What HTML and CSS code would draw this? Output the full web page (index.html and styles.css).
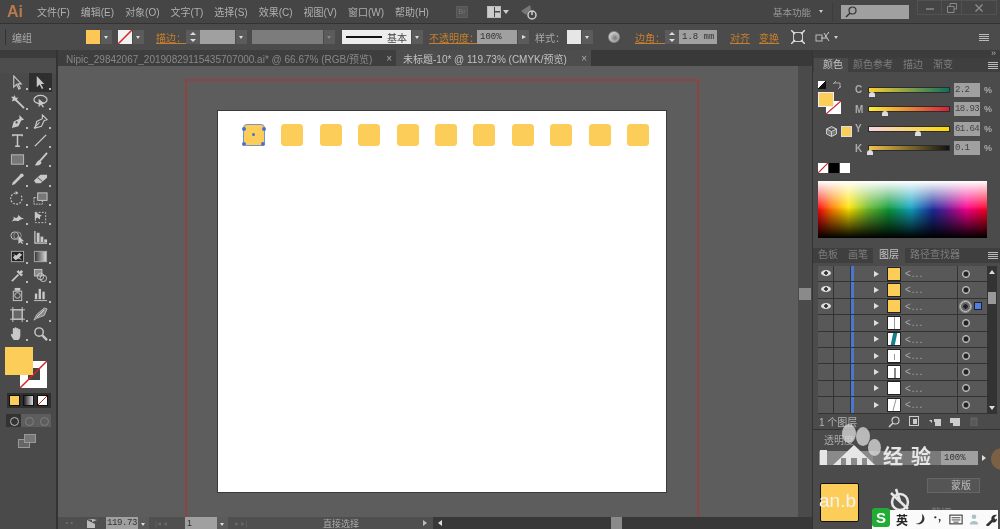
FILE: index.html
```html
<!DOCTYPE html>
<html lang="zh">
<head>
<meta charset="utf-8">
<title>Illustrator</title>
<link rel="stylesheet" href="styles.css">
</head>
<body>
<div class="app">
  <header class="menubar">
    <span class="logo">Ai</span>
    <nav class="menu">
      <span>文件(F)</span><span>编辑(E)</span><span>对象(O)</span><span>文字(T)</span><span>选择(S)</span><span>效果(C)</span><span>视图(V)</span><span>窗口(W)</span><span>帮助(H)</span>
    </nav>
    <span class="br-btn">Br</span>
    <svg class="arr-btn" width="14" height="12" viewBox="0 0 14 12"><rect x="0.5" y="0.5" width="13" height="11" fill="none" stroke="#bbb"/><rect x="1" y="1" width="6" height="10" fill="#ccc"/><rect x="8" y="1" width="5" height="4" fill="#ccc"/><rect x="8" y="6.500" width="5" height="4.500" fill="#ccc"/></svg>
    <span class="tri tri-menu"></span>
    <svg class="sync" width="18" height="18" viewBox="0 0 18 18"><path d="M1 8 L10 2 L11 6 L6 12 Z" fill="#777"/><circle cx="12" cy="12" r="4" fill="none" stroke="#ccc" stroke-width="1.500"/><path d="M12 8v4" stroke="#ccc" stroke-width="1.500"/></svg>
    <span class="workspace">基本功能</span>
    <span class="tri tri-small"></span>
    <span class="v-sep"></span>
    <div class="search"><svg width="12" height="12" viewBox="0 0 12 12"><circle cx="7.500" cy="4.500" r="3.500" fill="none" stroke="#333" stroke-width="1.200"/><path d="M5 7 L1 11" stroke="#333" stroke-width="1.500"/></svg></div>
    <div class="win-btns">
      <span class="win win-min"><svg width="10" height="10" viewBox="0 0 10 10"><path d="M1 6h8" stroke="#777" stroke-width="2"/></svg></span>
      <span class="win win-max"><svg width="10" height="10" viewBox="0 0 10 10"><path d="M3 3V0.500h6.500V6H7M0.500 3.500H7V9.500H0.500Z" stroke="#888" fill="none"/></svg></span>
      <span class="win win-close"><svg width="10" height="10" viewBox="0 0 10 10"><path d="M1.500 1.500l7 7M8.500 1.500l-7 7" stroke="#888" stroke-width="1.500"/></svg></span>
    </div>
  </header>

  <div class="controlbar">
    <span class="grip"></span>
    <span class="ctl-label w-group">编组</span>
    <span class="swatch yellow-swatch"></span>
    <span class="drop"></span>
    <span class="swatch none-swatch"><svg width="14" height="14" viewBox="0 0 14 14"><path d="M0 14L14 0" stroke="#d2232a" stroke-width="1.500"/></svg></span>
    <span class="drop"></span>
    <span class="link-label stroke-label">描边：</span>
    <span class="stepper"><i></i><b></b></span>
    <span class="field f-stroke"></span>
    <span class="drop"></span>
    <span class="field f-profile"></span>
    <span class="drop drop-dim"></span>
    <span class="line-box"><i></i><em>基本</em></span>
    <span class="drop"></span>
    <span class="link-label opacity-label">不透明度：</span>
    <span class="field f-opacity">100%</span>
    <span class="drop arrow-right"></span>
    <span class="ctl-label style-label">样式：</span>
    <span class="swatch white-swatch"></span>
    <span class="drop"></span>
    <span class="globe"></span>
    <span class="link-label corner-label">边角：</span>
    <span class="stepper"><i></i><b></b></span>
    <span class="field f-corner">1.8 mm</span>
    <span class="link-label align-label">对齐</span>
    <span class="link-label transform-label">变换</span>
    <svg class="ctl-icon icon-a" width="14" height="14" viewBox="0 0 14 14"><rect x="2.500" y="2.500" width="9" height="9" fill="none" stroke="#ccc"/><path d="M0 0l4 4M14 0l-4 4M0 14l4-4M14 14l-4-4" stroke="#ddd" stroke-width="1.500"/></svg>
    <svg class="ctl-icon icon-b" width="16" height="14" viewBox="0 0 16 14"><rect x="1" y="5" width="6" height="6" fill="none" stroke="#bbb"/><path d="M6 8h6M9 3l5 8M14 2l-4 5" stroke="#ccc"/></svg>
    <span class="tri tri-small icon-b-tri"></span>
    <span class="panel-menu ctl-menu"></span>
  </div>

  <div class="workspace-row">
    <aside class="toolbar">
      <div class="tool-grip"></div>
      <div class="tools">
        <span class="tool"><svg viewBox="0 0 16 16"><path d="M4 1v12l3-3 2.500 5 1.500-1-2.500-4.500H12Z" stroke-width="1.200"/></svg></span>
        <span class="tool tool-on"><svg viewBox="0 0 16 16"><path d="M4 1v12l3-3 2.500 5 1.500-1-2.500-4.500H12Z" class="solid"/></svg></span>
        <span class="tool"><svg viewBox="0 0 16 16"><path d="M6 6l9 9" stroke-width="2"/><path d="M5 1l1 3 3 0-2 2 1 3-3-2-3 1 1-3-2-2 3 0Z" class="solid"/></svg></span>
        <span class="tool"><svg viewBox="0 0 16 16"><ellipse cx="8" cy="6" rx="7" ry="4.500" stroke-width="1.300"/><path d="M6 5v9l2.500-2.500 2 3 1.200-.8-2-3H13Z" class="solid"/></svg></span>
        <span class="tool"><svg viewBox="0 0 16 16"><path d="M10 1l5 5-3 1-3 6-7 2 2-7 6-3Z" stroke-width="0" class="solid"/><circle cx="7" cy="9" r="1.200" fill="#4a4a4a" stroke="none"/></svg></span>
        <span class="tool"><svg viewBox="0 0 16 16"><path d="M10 1l5 5-3 1-3 6-7 2 2-7 6-3ZM1 15l6-6" stroke-width="1.200"/></svg></span>
        <span class="tool"><svg viewBox="0 0 16 16"><path d="M3 3.500V2h10v1.500M8 2v12M5.500 14h5" stroke-width="1.600"/></svg></span>
        <span class="tool"><svg viewBox="0 0 16 16"><path d="M2 14L14 2" stroke-width="1.500"/></svg></span>
        <span class="tool"><svg viewBox="0 0 16 16"><rect x="1.500" y="3" width="13" height="10" fill="#777" stroke="#bbb"/></svg></span>
        <span class="tool"><svg viewBox="0 0 16 16"><path d="M15 1L7 10" stroke-width="2"/><path d="M7 9c-3 0-3 3-5 5 3 1 7 0 7-3Z" class="solid"/></svg></span>
        <span class="tool"><svg viewBox="0 0 16 16"><path d="M3 11l8-8 2 2-8 8-3 1Z" class="solid"/><circle cx="12.500" cy="3.500" r="2" class="solid"/></svg></span>
        <span class="tool"><svg viewBox="0 0 16 16"><path d="M1 9l7-6h7v3l-7 6H3Z" class="solid"/><path d="M5 6l5 4" stroke="#4a4a4a"/></svg></span>
        <span class="tool"><svg viewBox="0 0 16 16"><path d="M12 5a6 6 0 1 1-5-3" stroke-width="1.200" stroke-dasharray="2 1.500"/><path d="M6 0l3 2-3 2Z" class="solid"/></svg></span>
        <span class="tool"><svg viewBox="0 0 16 16"><rect x="1" y="7" width="9" height="7" stroke-dasharray="2 1"/><rect x="5" y="2" width="10" height="8" fill="#777"/></svg></span>
        <span class="tool"><svg viewBox="0 0 16 16"><path d="M1 13c2-1 3-3 3-6 2 3 5 1 5-2 2 3 5 4 6 4-2 1-5 1-6 3-2-1-5-1-8 1Z" class="solid"/></svg></span>
        <span class="tool"><svg viewBox="0 0 16 16"><rect x="2.500" y="2.500" width="11" height="11" stroke-dasharray="2 1.500"/><path d="M2 2v8l2.500-2 3 2V7l2-1Z" class="solid"/></svg></span>
        <span class="tool"><svg viewBox="0 0 16 16"><circle cx="5" cy="6" r="4"/><circle cx="8" cy="6" r="4" stroke="#999"/><path d="M9 6v9l2-2 2 2 1-1-2-2h3Z" class="solid"/></svg></span>
        <span class="tool"><svg viewBox="0 0 16 16"><path d="M2 1v13h13" stroke-width="1.300"/><rect x="4" y="3" width="3" height="10" class="solid"/><rect x="8" y="7" width="3" height="6" class="solid"/><rect x="12" y="10" width="3" height="3" class="solid"/></svg></span>
        <span class="tool"><svg viewBox="0 0 16 16"><rect x="1.500" y="2.500" width="13" height="11" fill="#222" stroke="#aaa"/><path d="M3 5l4 2 3-3 3 2-3 3 3 3-4-2-3 2-3-3 2-2Z" class="solid"/></svg></span>
        <span class="tool"><svg viewBox="0 0 16 16"><rect x="1.500" y="2.500" width="13" height="11" fill="url(#grad)" stroke="#aaa"/><defs><linearGradient id="grad"><stop offset="0" stop-color="#333"/><stop offset="1" stop-color="#ddd"/></linearGradient></defs></svg></span>
        <span class="tool"><svg viewBox="0 0 16 16"><path d="M2 14l7-7" stroke-width="1.800"/><path d="M7 4l5 5 2-2-2-1 2-2-2-2-2 2-1-2Z" class="solid"/></svg></span>
        <span class="tool"><svg viewBox="0 0 16 16"><rect x="1.500" y="1.500" width="8" height="7" fill="#888"/><circle cx="8" cy="9" r="3.500"/><circle cx="11" cy="11" r="3.500"/></svg></span>
        <span class="tool"><svg viewBox="0 0 16 16"><circle cx="8" cy="9" r="3"/><rect x="3.500" y="4.500" width="9" height="10"/><path d="M5 1h6v3H5Z" class="solid"/></svg></span>
        <span class="tool"><svg viewBox="0 0 16 16"><path d="M1 14.500h14" stroke-width="1"/><rect x="2" y="7" width="2.500" height="6" class="solid"/><rect x="6" y="2" width="2.500" height="11" class="solid"/><rect x="10" y="5" width="2.500" height="8" class="solid"/></svg></span>
        <span class="tool"><svg viewBox="0 0 16 16"><rect x="3" y="3" width="10" height="10" fill="#666"/><path d="M3 0v16M13 0v16M0 3h16M0 13h16" stroke-width="1"/></svg></span>
        <span class="tool"><svg viewBox="0 0 16 16"><path d="M1 14l3-6 8-7 3 1-3 7-8 3Z" fill="#888" stroke="#bbb"/><path d="M4 11l8-8" stroke="#ddd"/></svg></span>
        <span class="tool"><svg viewBox="0 0 16 16"><path d="M4 15c-1-2-3-4-3-6 0-1 1-1 2 0V3c0-1 2-1 2 0V2c0-1 2-1 2 0v1c0-1 2-1 2 0v1c0-1 2-1 2 0v6c0 2-1 4-2 5Z" class="solid"/></svg></span>
        <span class="tool"><svg viewBox="0 0 16 16"><circle cx="6.500" cy="6.500" r="4.500" stroke-width="1.500"/><path d="M10 10l5 5" stroke-width="2.500"/></svg></span>
      </div>
      <div class="color-box">
        <span class="big-fill"></span>
        <span class="big-stroke"><svg width="27" height="27" viewBox="0 0 27 27"><path d="M0 27L27 0" stroke="#d2232a" stroke-width="1.500"/></svg></span>
      </div>
      <div class="mode-row">
        <span class="mode mode-color"></span><span class="mode mode-grad"></span><span class="mode mode-none"></span>
      </div>
      <div class="draw-row">
        <span class="draw draw-on"></span><span class="draw"></span><span class="draw"></span>
      </div>
      <div class="screen-mode"><i></i><b></b></div>
    </aside>

    <main class="docs">
      <div class="tabs">
        <div class="tab tab-a"><span>Nipic_29842067_20190829115435707000.ai* @ 66.67% (RGB/预览)</span><em>×</em></div>
        <div class="tab tab-b"><span>未标题-10* @ 119.73% (CMYK/预览)</span><em>×</em></div>
      </div>
      <div class="canvas-wrap">
        <div class="canvas">
          <div class="bleed"></div>
          <div class="artboard">
            <div class="square-row">
              <span class="square selected"><i class="h h1"></i><i class="h h2"></i><i class="h h3"></i><i class="h h4"></i><i class="h h5"></i></span>
              <span class="square"></span><span class="square"></span><span class="square"></span><span class="square"></span><span class="square"></span><span class="square"></span><span class="square"></span><span class="square"></span><span class="square"></span><span class="square"></span>
            </div>
          </div>
        </div>
        <div class="v-scroll"><span></span></div>
      </div>
      <div class="status">
        <div class="status-left">
          <span class="st-icons">◔◔</span>
          <svg class="st-share" width="10" height="9" viewBox="0 0 10 9"><path d="M0 1h5v2L10 1 6 0M0 1v8h8V5" fill="#bbb"/></svg>
          <span class="zoom-field">119.73</span><span class="drop st-drop"></span>
          <span class="nav">|◂ ◂</span>
          <span class="page-field">1</span><span class="drop st-drop"></span>
          <span class="nav nav-r">▸ ▸|</span>
          <span class="st-text">直接选择</span>
          <span class="tri-r"></span>
        </div>
        <div class="h-scroll"><span class="tri-l"></span><span class="h-thumb"></span></div>
      </div>
    </main>

    <aside class="panels">
      <div class="panel-strip">»</div>
      <section class="color-panel">
        <div class="ptabs">
          <span class="ptab on arrows">颜色</span><span class="ptab">颜色参考</span><span class="ptab">描边</span><span class="ptab">渐变</span><span class="panel-menu"></span>
        </div>
        <div class="color-body">
          <div class="color-left">
            <div class="default-icons"><i></i><svg width="8" height="8" viewBox="0 0 8 8"><path d="M0 3L3 0M5 8L8 5M1 2h6v5" stroke="#aaa" fill="none"/></svg></div>
            <div class="fs-pair"><span class="fs-fill"></span><span class="fs-stroke"><svg width="15" height="13" viewBox="0 0 15 13"><path d="M0 13L15 0" stroke="#d2232a" stroke-width="1.300"/></svg></span></div>
            <div class="gamut"><svg width="11" height="11" viewBox="0 0 11 11"><path d="M5.500 0.500l5 2.500v5l-5 2.500-5-2.500v-5ZM.5 3l5 2.500 5-2.500M5.500 5.500v5" fill="#777" stroke="#ccc"/></svg><span></span></div>
          </div>
          <div class="sliders">
            <div class="slider"><label>C</label><div class="track t-c"><i class="p-2"></i></div><span class="val">2.2</span><em>%</em></div>
            <div class="slider"><label>M</label><div class="track t-m"><i class="p-19"></i></div><span class="val">18.93</span><em>%</em></div>
            <div class="slider"><label>Y</label><div class="track t-y"><i class="p-62"></i></div><span class="val">61.64</span><em>%</em></div>
            <div class="slider"><label>K</label><div class="track t-k"><i class="p-0"></i></div><span class="val">0.1</span><em>%</em></div>
          </div>
        </div>
        <div class="chips"><span class="chip chip-none"><svg width="10" height="10" viewBox="0 0 10 10"><path d="M0 10L10 0" stroke="#d2232a" stroke-width="1.200"/></svg></span><span class="chip chip-k"></span><span class="chip chip-w"></span></div>
        <div class="spectrum"><i class="spec-light"></i><i class="spec-dark"></i></div>
      </section>

      <section class="layers-panel">
        <div class="ptabs ptabs-2">
          <span class="ptab">色板</span><span class="ptab">画笔</span><span class="ptab on">图层</span><span class="ptab">路径查找器</span><span class="panel-menu"></span>
        </div>
        <div class="layers-wrap">
          <div class="layers">
            <div class="lrow"><span class="eye on"></span><span class="lock"></span><span class="bar"></span><span class="expand"></span><span class="thumb th-y"></span><span class="lname">&lt;...</span><span class="target"></span><span class="sel"></span></div>
            <div class="lrow"><span class="eye on"></span><span class="lock"></span><span class="bar"></span><span class="expand"></span><span class="thumb th-y"></span><span class="lname">&lt;...</span><span class="target"></span><span class="sel"></span></div>
            <div class="lrow"><span class="eye on"></span><span class="lock"></span><span class="bar"></span><span class="expand"></span><span class="thumb th-y"></span><span class="lname">&lt;...</span><span class="target active"></span><span class="sel on"></span></div>
            <div class="lrow"><span class="eye"></span><span class="lock"></span><span class="bar"></span><span class="expand"></span><span class="thumb th-w th-line"></span><span class="lname">&lt;...</span><span class="target"></span><span class="sel"></span></div>
            <div class="lrow"><span class="eye"></span><span class="lock"></span><span class="bar"></span><span class="expand"></span><span class="thumb th-w th-teal"></span><span class="lname">&lt;...</span><span class="target"></span><span class="sel"></span></div>
            <div class="lrow"><span class="eye"></span><span class="lock"></span><span class="bar"></span><span class="expand"></span><span class="thumb th-w th-short"></span><span class="lname">&lt;...</span><span class="target"></span><span class="sel"></span></div>
            <div class="lrow"><span class="eye"></span><span class="lock"></span><span class="bar"></span><span class="expand"></span><span class="thumb th-w th-mid"></span><span class="lname">&lt;...</span><span class="target"></span><span class="sel"></span></div>
            <div class="lrow"><span class="eye"></span><span class="lock"></span><span class="bar"></span><span class="expand"></span><span class="thumb th-w"></span><span class="lname">&lt;...</span><span class="target"></span><span class="sel"></span></div>
            <div class="lrow"><span class="eye"></span><span class="lock"></span><span class="bar"></span><span class="expand"></span><span class="thumb th-w th-slant"></span><span class="lname">&lt;...</span><span class="target"></span><span class="sel"></span></div>
          </div>
          <div class="l-scroll"><span class="up"></span><span class="l-thumb"></span><span class="down"></span></div>
        </div>
        <div class="layers-foot">
          <span class="count">1 个图层</span>
          <svg class="foot-i i1" width="12" height="12" viewBox="0 0 12 12"><circle cx="7.500" cy="4.500" r="3.500" fill="none" stroke="#ccc" stroke-width="1.200"/><path d="M5 7l-4 4" stroke="#ccc" stroke-width="1.600"/></svg>
          <svg class="foot-i i2" width="10" height="10" viewBox="0 0 10 10"><rect x=".5" y=".5" width="9" height="9" fill="none" stroke="#ccc"/><rect x="4" y="3" width="4" height="5" fill="#ccc"/></svg>
          <svg class="foot-i i3" width="12" height="8" viewBox="0 0 12 8"><path d="M0 2h3v3M5 1h7v7H6V4H5Z" fill="#ccc"/></svg>
          <svg class="foot-i i4" width="10" height="10" viewBox="0 0 10 10"><path d="M0 2h7l3 0v8H3V7H0Z" fill="#ccc"/></svg>
          <svg class="foot-i i5" width="10" height="10" viewBox="0 0 10 10"><path d="M1 2h8M2 3h6v7H2Z" fill="#585858" stroke="#666"/></svg>
        </div>
      </section>

      <section class="opacity-panel">
        <div class="op-tab">透明度</div>
        <div class="op-row"><span class="op-mode"></span><span class="op-gap"></span><span class="field f-op">100%</span><span class="op-arrow"></span></div>
        <div class="op-thumbs"><span class="op-thumb"></span><span class="mask-btn">蒙版</span></div>
        <div class="op-clip">剪切</div>
      </section>
    </aside>
  </div>
</div>

<div class="overlay paw">
  <i class="toe t1"></i><i class="toe t2"></i><i class="toe t3"></i>
  <svg class="paw-base" width="60" height="22" viewBox="0 0 60 22"><path d="M0 6h7v15H0ZM13 21L34 1 55 21H47V14H42V21H37V14H31V21H26V14H21V21Z" fill="#e6e6e6"/></svg>
  <span class="paw-text">经验</span>
  <span class="url-text">an.b</span>
</div>
<div class="overlay brown-dot"></div>
<div class="overlay clock"><svg width="24" height="24" viewBox="0 0 24 24"><circle cx="12" cy="14" r="8" fill="none" stroke="#e6e6e6" stroke-width="2.500"/><path d="M3 5l17 16M8 1l4 12" stroke="#e6e6e6" stroke-width="2.500"/></svg></div>
<div class="overlay ime">
  <span class="ime-s">S</span><span class="ime-en">英</span>
  <svg width="13" height="13" viewBox="0 0 15 15"><path d="M9 1a6 6 0 0 1-7 11c5 1 9-4 7-11Z" fill="#333"/></svg>
  <svg width="10" height="10" viewBox="0 0 13 13"><circle cx="3" cy="3" r="1.500" fill="#333"/><path d="M9 5c2 2 0 5-2 6 1-1 2-4 0-5Z" fill="#333"/></svg>
  <svg width="14" height="11" viewBox="0 0 16 12"><rect x="1" y="1" width="14" height="10" fill="none" stroke="#333" stroke-width="1.200"/><path d="M3 4h10M3 6.500h10M5 9h6" stroke="#333"/></svg>
  <svg width="10" height="13" viewBox="0 0 13 15"><circle cx="6.500" cy="4" r="3" fill="#a9c3c0"/><path d="M1 14c0-6 11-6 11 0Z" fill="#a9c3c0"/></svg>
  <svg width="13" height="13" viewBox="0 0 14 14"><path d="M1 13l6-6c-1-3 2-6 6-5l-3 3 1 2 2-1c0 4-3 5-5 4l-5 5Z" fill="#333"/></svg>
</div>
</body>
</html>
```
FILE: styles.css
```css
* { box-sizing: border-box; }
html, body { margin: 0; width: 1000px; height: 529px; overflow: hidden; background: #4a4a4a; }
body { position: relative; font-family: "Liberation Sans", "Noto Sans CJK SC", sans-serif; font-size: 10px; color: #b4b4b4; filter: blur(.35px); }
em, i { font-style: normal; }
.app { width: 1000px; height: 529px; display: flex; flex-direction: column; }
.menubar > *, .controlbar > * { flex: none; }

/* menu bar */
.menubar { height: 23px; background: #454545; display: flex; align-items: center; flex: none; }
.logo { width: 37px; padding-left: 7px; color: #b8794c; font-size: 16px; font-weight: bold; }
.menu { display: flex; gap: 11px; width: 408px; }
.menu span { font-size: 10px; color: #b0b0b0; white-space: nowrap; }
.br-btn { width: 12px; height: 12px; background: #555; border: 1px solid #5e5e5e; color: #777; font-size: 7px; line-height: 10px; text-align: center; margin-left: 11px; }
.arr-btn { margin-left: 19px; }
.tri { display: inline-block; width: 0; height: 0; border-left: 3px solid transparent; border-right: 3px solid transparent; border-top: 4px solid #ccc; }
.tri-menu { margin-left: 2px; }
.sync { margin-left: 11px; }
.workspace { margin-left: 235px; font-size: 9.500px; color: #999; white-space: nowrap; }
.tri-small { margin-left: 8px; border-top-width: 3px; border-left-width: 2.500px; border-right-width: 2.500px; }
.v-sep { width: 1px; height: 20px; background: #3c3c3c; margin-left: 9px; }
.search { width: 68px; height: 14px; margin-left: 8px; background: #a0a0a0; display: flex; align-items: center; padding-left: 4px; }
.win-btns { display: flex; margin-left: 8px; height: 15px; margin-top: -8px; border: 1px solid #525252; }
.win { display: flex; align-items: center; justify-content: center; border-right: 1px solid #525252; }
.win-min { width: 24px; } .win-max { width: 20px; } .win-close { width: 34px; border-right: 0; }

/* control bar */
.controlbar { height: 27px; flex: none; background: #4b4b4b; border-top: 1px solid #333; display: flex; align-items: center; position: relative; }
.grip { width: 1px; height: 16px; background: #333; margin-left: 5px; }
.ctl-label { color: #aaa; white-space: nowrap; }
.w-group { margin-left: 6px; width: 74px; }
.swatch { width: 14px; height: 14px; flex: none; display: block; }
.yellow-swatch { background: #fdc755; }
.none-swatch { background: #f2f2f2; margin-left: 6px; }
.white-swatch { background: #e6e6e6; margin-left: 6px; }
.drop { flex: none; width: 11px; height: 14px; margin-left: 1px; background: #5b5b5b; position: relative; display: block; }
.drop::after { content: ""; position: absolute; left: 3px; top: 6px; border-left: 2.500px solid transparent; border-right: 2.500px solid transparent; border-top: 3px solid #ddd; }
.drop-dim::after { border-top-color: #888; }
.arrow-right::after { border-left: 4px solid #ddd; border-right: 0; border-top: 2.500px solid transparent; border-bottom: 2.500px solid transparent; left: 4px; top: 5px; }
.link-label { color: #c87f2c; text-decoration: underline; text-underline-offset: 1px; white-space: nowrap; flex: none; }
.stroke-label { margin-left: 12px; width: 30px; }
.stepper { width: 14px; height: 14px; background: #5b5b5b; flex: none; display: flex; flex-direction: column; align-items: center; justify-content: space-around; }
.stepper i { border-left: 3px solid transparent; border-right: 3px solid transparent; border-bottom: 3px solid #ddd; }
.stepper b { border-left: 3px solid transparent; border-right: 3px solid transparent; border-top: 3px solid #ddd; }
.field { display: block; height: 14px; flex: none; background: #a0a0a0; color: #333; font-size: 9px; line-height: 14px; font-family: "Liberation Mono", monospace; padding-left: 3px; }
.f-stroke { width: 35px; }
.f-profile { width: 71px; background: #7c7c7c; margin-left: 5px; }
.line-box { width: 69px; height: 14px; flex: none; margin-left: 7px; background: #ececec; display: flex; align-items: center; padding-left: 4px; }
.line-box i { width: 36px; height: 2px; background: #111; }
.line-box em { margin-left: 5px; color: #444; font-size: 10px; }
.opacity-label { margin-left: 6px; width: 48px; }
.f-opacity { width: 40px; }
.style-label { margin-left: 6px; width: 26px; }
.globe { width: 12px; height: 12px; border-radius: 50%; background: radial-gradient(circle at 60% 60%, #777, #ddd 80%); margin-left: 15px; flex: none; border: 1px solid #888; }
.corner-label { margin-left: 15px; width: 30px; }
.f-corner { width: 38px; font-size: 9px; }
.align-label { margin-left: 13px; width: 29px; }
.transform-label { width: 32px; }
.ctl-icon { flex: none; }
.icon-b { margin-left: 10px; }
.icon-b-tri { margin-left: 3px; }
.panel-menu { display: block; width: 10px; height: 7px; flex: none; background: repeating-linear-gradient(#bbb 0 1px, transparent 1px 2px); }
.ctl-menu { position: absolute; left: 979px; top: 10px; }

/* main row */
.workspace-row { flex: 1; display: flex; min-height: 0; }

/* toolbar */
.toolbar { width: 58px; flex: none; background: #4a4a4a; border-right: 2px solid #333; }
.tool-grip { height: 23px; background: linear-gradient(#3c3c3c 0 8px, #4d4d4d 8px); }
.tools { display: grid; grid-template-columns: 23px 23px; grid-auto-rows: 19.300px; padding-left: 6px; }
.tool { display: flex; align-items: center; justify-content: center; position: relative; }
.tool svg { width: 15px; height: 15px; fill: none; stroke: #c8c8c8; }
.tool svg .solid { fill: #c8c8c8; stroke: none; }
.tool-on { background: #2f2f2f; }
.tool::after { content: ""; position: absolute; right: 1px; bottom: 2px; width: 2px; height: 2px; background: #bbb; }
.color-box { position: relative; height: 46px; margin-top: 4px; }
.big-fill { position: absolute; left: 5px; top: 0; width: 28px; height: 28px; background: #fdcd5a; z-index: 1; }
.big-stroke { position: absolute; left: 20px; top: 14px; width: 27px; height: 27px; background: #fff; display: block; }
.big-stroke::before { content: ""; position: absolute; left: 8px; top: 7px; width: 12px; height: 12px; background: #444; }
.big-stroke svg { position: absolute; left: 0; top: 0; }
.mode-row { display: flex; gap: 3px; margin-left: 7px; width: 44px; height: 15px; background: #2f2f2f; padding: 2px; }
.mode { width: 11px; height: 11px; display: block; flex: none; border: 1px solid #111; }
.mode-color { background: #fdcd5a; }
.mode-grad { background: linear-gradient(90deg, #222, #ddd); }
.mode-none { background: linear-gradient(135deg, #fff 45%, #d2232a 45% 55%, #fff 55%); }
.draw-row { display: flex; margin: 6px 0 0 6px; height: 13px; width: 45px; }
.draw { flex: 1; background: #5d5d5d; position: relative; }
.draw::after { content: ""; position: absolute; left: 4px; top: 3px; width: 7px; height: 7px; border-radius: 50%; border: 1px solid #808080; }
.draw-on { background: #333; }
.draw-on::after { border-color: #bbb; }
.screen-mode { position: relative; width: 18px; height: 14px; margin: 7px 0 0 18px; }
.screen-mode i, .screen-mode b { position: absolute; display: block; width: 12px; height: 9px; border: 1px solid #999; }
.screen-mode i { left: 0; bottom: 0; background: #666; }
.screen-mode b { right: 0; top: 0; background: #777; }

/* documents */
.docs { flex: 1; min-width: 0; display: flex; flex-direction: column; }
.tabs { height: 16px; background: #393939; display: flex; flex: none; }
.tab { display: flex; align-items: center; justify-content: space-between; white-space: nowrap; font-size: 10px; padding: 0 4px 0 8px; }
.tab-a { width: 338px; color: #888; background: #3e3e3e; }
.tab-b { width: 195px; color: #c2c2c2; background: #4d4d4d; padding-left: 7px; }
.tab em { font-size: 10px; color: #aaa; }
.canvas-wrap { flex: 1; display: flex; min-height: 0; }
.canvas { flex: 1; position: relative; background: #5d5d5d; overflow: hidden; }
.bleed { position: absolute; left: 127px; top: 13px; width: 514px; height: 480px; border: 2px solid #8f4444; }
.artboard { position: absolute; left: 160px; top: 45px; width: 448px; height: 381px; background: #fff; box-shadow: 0 0 0 1px #3a3a3a; padding: 13px 17px 0 25px; }
.square-row { display: flex; justify-content: space-between; }
.square { width: 22px; height: 22px; border-radius: 3.500px; background: #fdcd5a; display: block; position: relative; flex: none; }
.square.selected { border-radius: 4px; border: 1px solid #7b92c8; }
.h { position: absolute; width: 4px; height: 4px; border-radius: 50%; background: #4a6fd0; }
.h1 { left: -2px; top: 2px; } .h2 { right: -2px; top: 2px; } .h3 { left: -2px; bottom: -1px; } .h4 { right: -1px; bottom: -1px; }
.h5 { left: 8px; top: 8px; width: 3px; height: 3px; }
.v-scroll { width: 14px; flex: none; background: #4a4a4a; position: relative; }
.v-scroll span { position: absolute; left: 1px; top: 222px; width: 12px; height: 12px; background: #8a8a8a; }

/* status bar */
.status { height: 12px; flex: none; display: flex; }
.status-left { width: 375px; background: #4f4f4f; display: flex; align-items: center; overflow: hidden; color: #999; font-size: 9px; }
.st-icons { width: 20px; margin-left: 6px; color: #777; font-size: 8px; }
.st-share { margin-left: 3px; }
.zoom-field { margin-left: 9px; width: 32px; height: 12px; background: #a0a0a0; color: #333; font-size: 9px; line-height: 13px; padding-left: 1px; font-family: "Liberation Mono", monospace; letter-spacing: -.4px; }
.st-drop { height: 12px; margin-left: 0; }
.st-drop::after { top: 6px; }
.nav { color: #666; margin-left: 6px; width: 24px; font-size: 8px; }
.page-field { margin-left: 6px; width: 32px; height: 12px; background: #a0a0a0; color: #333; font-size: 9px; line-height: 13px; padding-left: 2px; }
.nav-r { margin-left: 7px; width: 26px; }
.st-text { margin-left: 62px; width: 100px; font-size: 9px; color: #aaa; }
.tri-r { border-left: 4px solid #bbb; border-top: 3px solid transparent; border-bottom: 3px solid transparent; }
.h-scroll { flex: 1; background: #383838; position: relative; display: flex; align-items: center; }
.tri-l { display: block; border-right: 4px solid #ddd; border-top: 3.500px solid transparent; border-bottom: 3.500px solid transparent; margin-left: 5px; }
.h-thumb { position: absolute; left: 178px; top: 0; width: 11px; height: 12px; background: #8a8a8a; }

/* right panels */
.panels { width: 188px; flex: none; background: #4b4b4b; border-left: 1px solid #333; display: flex; flex-direction: column; }
.panel-strip { height: 8px; background: #3c3c3c; color: #aaa; font-size: 9px; line-height: 7px; text-align: right; padding-right: 4px; flex: none; }
.ptabs { display: flex; align-items: center; height: 14px; background: #3f3f3f; position: relative; padding-left: 1px; }
.ptab { padding: 0 5px; height: 14px; line-height: 14px; color: #7d7d7d; font-size: 10px; white-space: nowrap; }
.ptab.on { background: #4b4b4b; color: #c4c4c4; }
.ptab.arrows { padding-left: 9px; padding-right: 5px; }
.ptabs .panel-menu { position: absolute; right: 2px; top: 4px; }
.color-panel { height: 183px; flex: none; }
.color-body { display: flex; height: 83px; }
.color-left { width: 42px; flex: none; padding-left: 5px; }
.default-icons { display: flex; gap: 7px; align-items: center; height: 10px; margin-top: 8px; }
.default-icons i { width: 8px; height: 8px; display: block; background: linear-gradient(135deg, #fff 50%, #111 50%); }
.fs-pair { position: relative; height: 28px; margin-top: 2px; }
.fs-fill { position: absolute; left: 0; top: 0; width: 16px; height: 15px; background: #fdcd5a; border: 1px solid #eee; z-index: 1; }
.fs-stroke { position: absolute; left: 8px; top: 9px; width: 15px; height: 13px; background: #fff; display: block; }
.fs-stroke svg { display: block; }
.gamut { display: flex; align-items: center; gap: 4px; margin-left: 8px; margin-top: 6px; }
.gamut span { width: 11px; height: 11px; background: #fdcd5a; border: 1px solid #ddd; }
.sliders { flex: 1; padding-top: 8px; }
.slider { height: 19.500px; display: flex; align-items: center; }
.slider label { width: 14px; margin-left: 0; color: #aaa; font-size: 10px; font-weight: bold; }
.track { width: 80px; height: 4px; margin-right: 5px; position: relative; box-shadow: 0 0 0 1px #2c2c2c; }
.track i { position: absolute; top: 4px; width: 6px; height: 5px; background: #ddd; border-radius: 3px 3px 0 0; }
.p-2 { left: 0; } .p-19 { left: 13px; } .p-62 { left: 46px; } .p-0 { left: -2px; }
.t-c { background: linear-gradient(90deg, #fdd030, #0f6f5f); }
.t-m { background: linear-gradient(90deg, #fff033, #d5203c); }
.t-y { background: linear-gradient(90deg, #f8d6e2, #ffd700); }
.t-k { background: linear-gradient(90deg, #f0c54c, #111); }
.val { display: block; width: 26px; height: 14px; background: #a0a0a0; color: #444; font-family: "Liberation Mono", monospace; font-size: 9px; letter-spacing: -.6px; line-height: 14px; padding-left: 1px; white-space: nowrap; }
.slider em { margin-left: 4px; color: #aaa; font-weight: bold; font-size: 9px; }
.chips { display: flex; margin: 8px 0 0 5px; }
.chip { width: 10px; height: 10px; display: block; }
.chip-none { background: #fff; }
.chip-k { background: #000; margin-left: 1px; }
.chip-w { background: #fff; margin-left: 1px; }
.chip svg { display: block; }
.spectrum { position: relative; width: 169px; height: 57px; margin: 8px 0 0 5px; background: linear-gradient(90deg, #ff0010 0%, #ff7a00 8%, #ffe600 18%, #6dbb2d 30%, #0d9a3c 42%, #12a5c4 55%, #1c2c9c 68%, #6a1a9a 76%, #ff0090 88%, #ff0020 100%); overflow: hidden; }
.spectrum i { position: absolute; left: 0; right: 0; display: block; }
.spec-light { top: 0; height: 50%; background: linear-gradient(#fff, rgba(255, 255, 255, 0)); }
.spec-dark { bottom: 0; height: 55%; background: linear-gradient(rgba(0, 0, 0, 0), #000); }
.layers-panel { flex: none; margin-top: 7px; }
.ptabs-2 { height: 15px; padding-left: 0; }
.ptabs-2 .ptab { height: 15px; }
.ptabs-2 .ptab.on { padding: 0 6px; }
.layers-wrap { display: flex; margin: 3px 0 0 5px; height: 148px; }
.layers { width: 170px; flex: none; }
.lrow { height: 16.400px; display: flex; align-items: center; background: #585858; border-bottom: 1px solid #333; }
.eye { width: 16px; height: 100%; border-right: 1px solid #333; position: relative; display: block; flex: none; }
.eye.on::after { content: ""; position: absolute; left: 3px; top: 4px; width: 10px; height: 6px; border-radius: 50%; background: radial-gradient(circle, #333 0 1.500px, #ddd 2px); }
.lock { width: 17px; height: 100%; border-right: 1px solid #333; display: block; flex: none; }
.bar { width: 3px; height: 100%; background: #4a78cf; margin-left: 0; flex: none; }
.expand { display: block; flex: none; margin-left: 20px; width: 0; height: 0; border-left: 5px solid #ddd; border-top: 3.500px solid transparent; border-bottom: 3.500px solid transparent; }
.thumb { display: block; flex: none; margin-left: 8px; width: 14px; height: 14px; position: relative; background: #fff; border: 1px solid #222; overflow: hidden; }
.th-y { background: #fdcd5a; }
.th-line::after, .th-short::after, .th-mid::after, .th-slant::after { content: ""; position: absolute; left: 6px; top: 0; width: 1px; height: 12px; background: #999; }
.th-short::after { top: 4px; height: 6px; }
.th-mid::after { top: 2px; height: 10px; width: 2px; background: #888; }
.th-slant::after { transform: rotate(15deg); }
.th-teal::after { content: ""; position: absolute; left: 4px; top: -1px; width: 4px; height: 14px; background: #15808c; transform: rotate(12deg); }
.lname { width: 53px; margin-left: 4px; color: #aaa; font-size: 10px; letter-spacing: 1px; flex: none; height: 100%; line-height: 15px; border-right: 1px solid #333; }
.target { display: block; flex: none; margin-left: 4px; width: 8px; height: 8px; border-radius: 50%; border: 1px solid #ccc; background: radial-gradient(circle, #222 0 2px, #666 2.500px); }
.target.active { width: 11px; height: 11px; margin-left: 2px; box-shadow: 0 0 0 1px #999; }
.sel { display: block; flex: none; width: 6px; height: 6px; margin-left: 4px; }
.sel.on { background: #4d7fe6; box-shadow: 0 0 0 1px #222; margin-left: 4px; }
.l-scroll { width: 10px; margin-left: -1px; background: #333; position: relative; flex: none; }
.l-scroll .up { position: absolute; left: 2px; top: 4px; border-left: 3px solid transparent; border-right: 3px solid transparent; border-bottom: 4px solid #ddd; }
.l-scroll .down { position: absolute; left: 2px; bottom: 4px; border-left: 3px solid transparent; border-right: 3px solid transparent; border-top: 4px solid #ddd; }
.l-thumb { position: absolute; left: 1px; top: 26px; width: 8px; height: 12px; background: #999; }
.layers-foot { height: 15px; display: flex; align-items: center; position: relative; }
.count { margin-left: 6px; color: #b4b4b4; font-size: 10px; white-space: nowrap; width: 75px; }
.foot-i { position: absolute; top: 2px; }
.i1 { left: 75px; } .i2 { left: 96px; } .i3 { left: 116px; top: 4px; } .i4 { left: 137px; } .i5 { left: 156px; }
.opacity-panel { flex: 1; background: #4b4b4b; position: relative; border-top: 1px solid #333; }
.op-tab { height: 14px; line-height: 14px; margin-top: 4px; padding-left: 11px; color: #aaa; }
.op-row { display: flex; align-items: center; height: 14px; margin-top: 3px; padding-left: 6px; }
.op-mode { width: 54px; height: 14px; background: #8a8a8a; }
.op-gap { width: 68px; height: 14px; background: #7a7a7a; }
.f-op { width: 37px; }
.op-arrow { margin-left: 4px; border-left: 4px solid #ddd; border-top: 3px solid transparent; border-bottom: 3px solid transparent; }
.op-thumbs { display: flex; margin-top: 13px; padding-left: 7px; }
.op-thumb { width: 39px; height: 39px; background: #fdcd5a; border: 1px solid #111; border-radius: 2px; display: block; margin-top: 5px; }
.mask-btn { margin-left: 68px; width: 53px; height: 15px; background: #555; border: 1px solid #666; color: #bbb; text-align: right; padding-right: 8px; line-height: 13px; white-space: nowrap; }
.op-clip { position: absolute; left: 118px; bottom: 10px; color: #888; }

/* watermark and IME overlays */
.overlay { position: absolute; }
.paw { left: 818px; top: 424px; width: 130px; height: 60px; }
.toe { position: absolute; width: 14px; height: 19px; border-radius: 50%; background: rgba(222, 222, 222, .75); }
.t1 { left: 24px; top: 0; } .t2 { left: 38px; top: 3px; } .t3 { left: 50px; top: 15px; width: 13px; height: 17px; }
.paw-base { position: absolute; left: 2px; top: 20px; }
.paw-text { position: absolute; left: 65px; top: 20px; color: #e6e6e6; font-size: 20px; line-height: 26px; font-weight: bold; letter-spacing: 8px; white-space: nowrap; }
.url-text { position: absolute; left: 1px; top: 66px; color: #f2f2f2; font-size: 19px; line-height: 22px; white-space: nowrap; }
.brown-dot { left: 991px; top: 448px; width: 22px; height: 22px; border-radius: 50%; background: #7b6046; }
.clock { left: 888px; top: 488px; line-height: 0; }
.ime { left: 872px; top: 510px; width: 126px; height: 19px; background: #fafafa; display: flex; align-items: center; gap: 6px; }
.ime > * { flex: none; }
.ime-s { width: 18px; height: 19px; margin-top: -4px; background: #21ad35; color: #fff; font-size: 15px; font-weight: bold; text-align: center; line-height: 19px; border-radius: 3px; }
.ime-en { color: #222; font-size: 12px; font-weight: bold; }
```
